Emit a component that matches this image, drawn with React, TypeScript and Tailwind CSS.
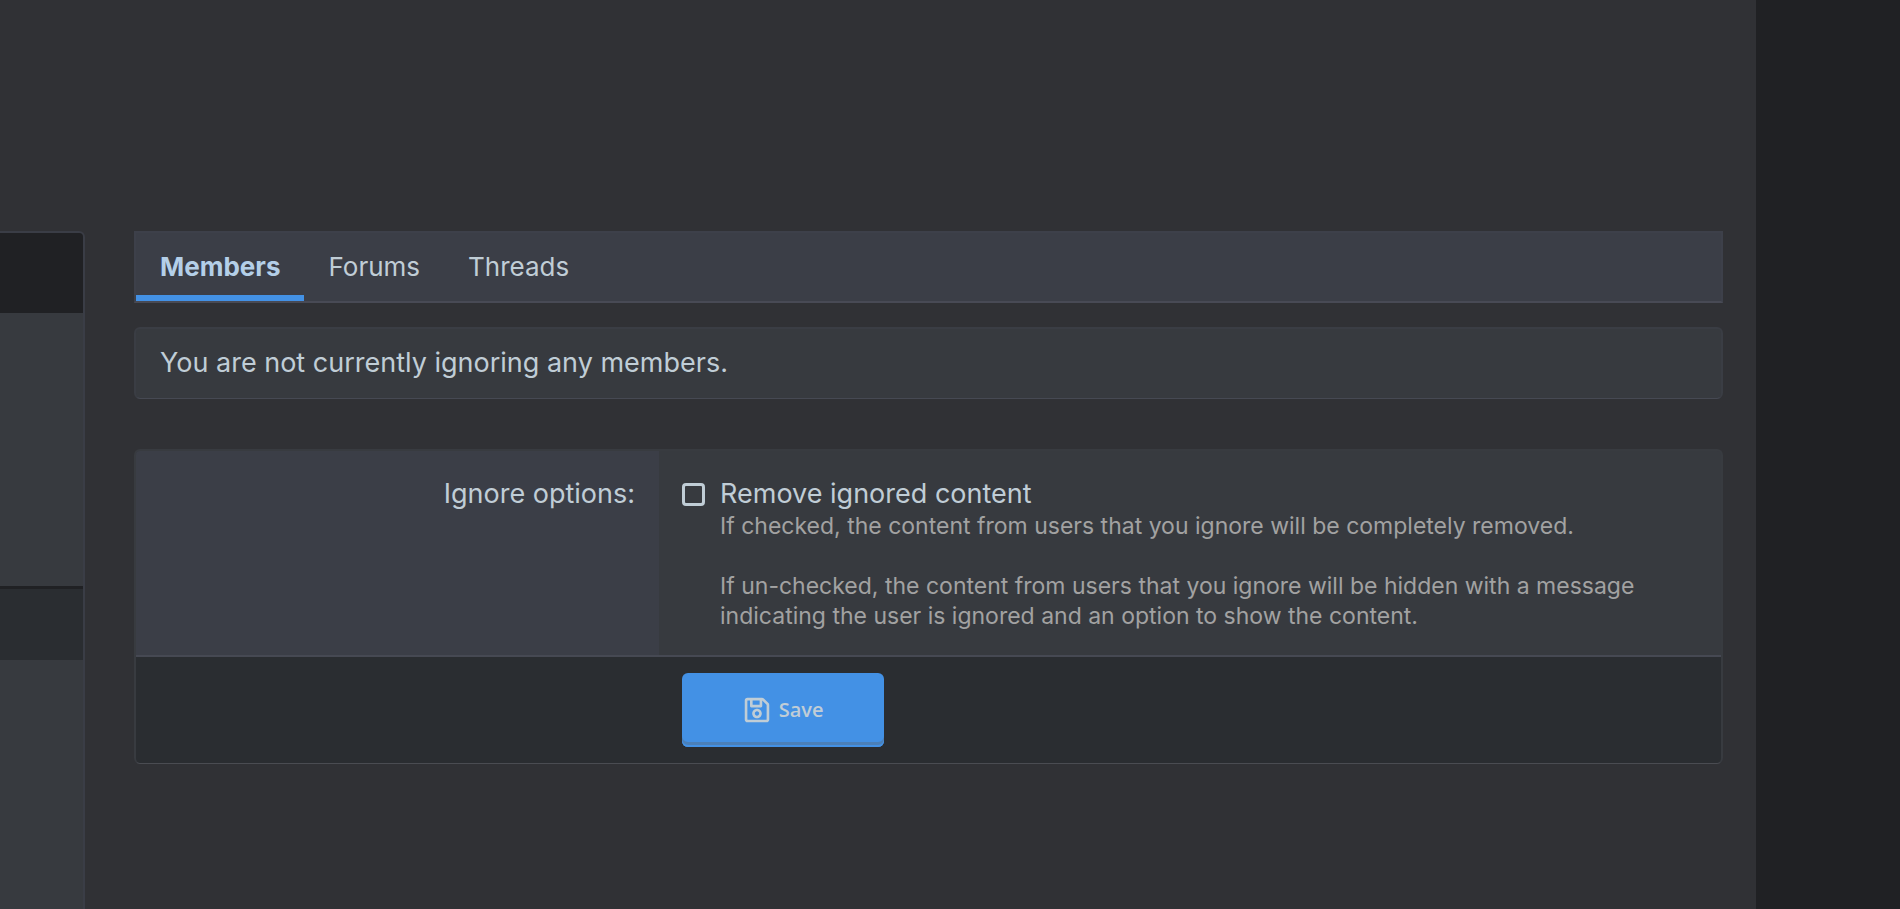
import { FC, ReactNode } from 'react';
import { FaRegSave } from 'react-icons/fa';
import { twMerge } from 'tailwind-merge';

interface ITabProps {
  active?: boolean;
  children: ReactNode;
}

const Tab: FC<ITabProps> = ({ active, children }) => (
  <a
    href="#"
    aria-current={active ? 'page' : undefined}
    className={twMerge(
      'px-6 pt-[17px] pb-[11px] border-b-6 border-transparent',
      active && 'font-bold text-[#b4cfe8] border-[#4391e5]'
    )}
  >
    {children}
  </a>
);

const Sidebar: FC = () => (
  <aside className="flex flex-col w-[85px] shrink-0 border-t-2 border-r-2 border-[#3a3d46] rounded-tr-md bg-[#373a3f] overflow-hidden">
    <div className="h-20 bg-[#202124]" />
    <div className="h-[273px]" />
    <div className="h-[74px] border-t-3 border-[#202124] bg-[#2a2d31]" />
  </aside>
);

const IgnoreOptions: FC = () => (
  <form
    className="border-2 border-b border-[#383b40] border-b-[#4a4c52] rounded-md bg-[#373a3f] overflow-hidden"
    onSubmit={(e) => e.preventDefault()}
  >
    <div className="grid grid-cols-[33%_1fr] border-b-2 border-[#464953]">
      <div className="bg-[#3b3e47] px-6 pt-[26px] text-right">Ignore options:</div>
      <div className="flex gap-[15px] px-[23px] pt-[26px] pb-6">
        <input
          id="remove-ignored"
          type="checkbox"
          aria-describedby="remove-ignored-hint"
          className="appearance-none size-[23px] mt-[6px] shrink-0 border-3 border-[#c0cdd6] rounded-sm checked:bg-[#4391e5]"
        />
        <div>
          <label htmlFor="remove-ignored" className="block">
            Remove ignored content
          </label>
          <div id="remove-ignored-hint" className="text-[23px] leading-[30px] text-[#a2a2a2]">
            <p>If checked, the content from users that you ignore will be completely removed.</p>
            <br />
            <p>
              If un-checked, the content from users that you ignore will be hidden with a message
              indicating the user is ignored and an option to show the content.
            </p>
          </div>
        </div>
      </div>
    </div>
    <div className="grid grid-cols-[33%_1fr] bg-[#2a2d31] py-4">
      <div className="col-start-2 px-[23px]">
        <button
          type="submit"
          className={twMerge(
            'flex items-center justify-center gap-2 w-[202px] h-[74px] rounded-md',
            'bg-[#4391e5] shadow-[inset_0_-2px_#4391e5,inset_0_-5px_#4b80b9]',
            "font-['Open_Sans',sans-serif] font-semibold text-[20px] text-[#c0cdd6]"
          )}
        >
          <FaRegSave className="size-7" />
          Save
        </button>
      </div>
    </div>
  </form>
);

const App: FC = () => (
  <div className="min-h-screen flex bg-[#202124] pr-36 font-[Inter,sans-serif] text-[27px] leading-[34px] text-[#c0cdd6]">
    <div className="flex flex-1 bg-[#303135] pt-[231px] pr-[33px]">
      <Sidebar />
      <main className="flex-1 ml-[49px]">
        <nav className="flex border-2 border-[#3d404a] border-b-[#484a55] bg-[#3b3e47] text-[26px]">
          <Tab active>Members</Tab>
          <Tab>Forums</Tab>
          <Tab>Threads</Tab>
        </nav>
        <div className="mt-6 px-6 pt-[17px] pb-[18px] border-2 border-b border-[#3a3d44] border-b-[#464953] rounded-md bg-[#373a3f]">
          You are not currently ignoring any members.
        </div>
        <div className="mt-[50px]">
          <IgnoreOptions />
        </div>
      </main>
    </div>
  </div>
);

export default App;
